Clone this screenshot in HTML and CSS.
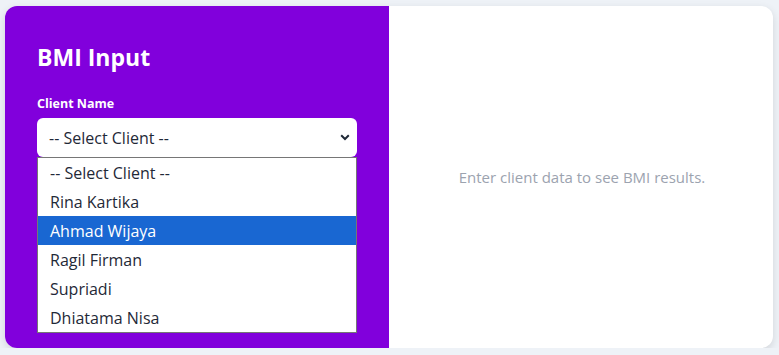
FILE: index.html
```html
<!DOCTYPE html>
<html lang="en">
<head>
    <meta charset="UTF-8">
    <title>BMI Calculator</title>
    <link rel="stylesheet" href="styles.css">
</head>
<body>
    <div class="card">
        <div class="input-panel">
            <h1>BMI Input</h1>
            <label class="field-label">Client Name</label>
            <div class="select-wrap">
                <div class="select">
                    <span>-- Select Client --</span>
                    <svg class="chevron" width="10" height="7" viewBox="0 0 10 7">
                        <path d="M1.2 1.3 L5 5 L8.8 1.3" fill="none" stroke="#1f2937" stroke-width="2"/>
                    </svg>
                </div>
                <ul class="options">
                    <li>-- Select Client --</li>
                    <li>Rina Kartika</li>
                    <li class="active">Ahmad Wijaya</li>
                    <li>Ragil Firman</li>
                    <li>Supriadi</li>
                    <li>Dhiatama Nisa</li>
                </ul>
            </div>
        </div>
        <div class="result-panel">
            <p class="placeholder">Enter client data to see BMI results.</p>
        </div>
    </div>
</body>
</html>
```

FILE: styles.css
```css
* { margin: 0; padding: 0; box-sizing: border-box; }
body {
    font-family: 'Open Sans', 'Noto Sans', sans-serif;
    background: #eef2f7;
    color: #1f2937;
    padding: 6px 6px 0 5px;
}
.card {
    display: flex;
    height: 342px;
    background: #fff;
    border-radius: 12px;
    overflow: hidden;
    box-shadow: 0 3px 8px rgba(0, 0, 0, 0.12);
}
.input-panel {
    width: 384px;
    background: #8100dc;
    color: #fff;
    padding: 38px 32px 0 32px;
}
h1 {
    font-size: 23px;
    font-weight: 700;
    line-height: 26px;
    margin-bottom: 26px;
}
.field-label {
    display: block;
    font-size: 12.5px;
    font-weight: 700;
    line-height: 16px;
    margin-bottom: 6px;
}
.select-wrap {
    position: relative;
}
.select {
    height: 39px;
    background: #fff;
    border-radius: 6px;
    display: flex;
    align-items: center;
    justify-content: space-between;
    padding: 0 7px 0 12px;
    font-size: 16px;
    color: #1f2937;
}
.options {
    position: absolute;
    top: 39px;
    left: 0;
    right: 0;
    list-style: none;
    background: #fff;
    border: 1px solid #767676;
    z-index: 2;
}
.options li {
    height: 29px;
    line-height: 30px;
    padding-left: 12px;
    font-size: 16px;
    color: #1f2937;
}
.options li.active {
    background: #1967d2;
    color: #fff;
}
.result-panel {
    flex: 1;
    display: flex;
    align-items: center;
    justify-content: center;
}
.placeholder {
    color: #9ca3af;
    font-size: 15px;
    padding-left: 2px;
}
```
